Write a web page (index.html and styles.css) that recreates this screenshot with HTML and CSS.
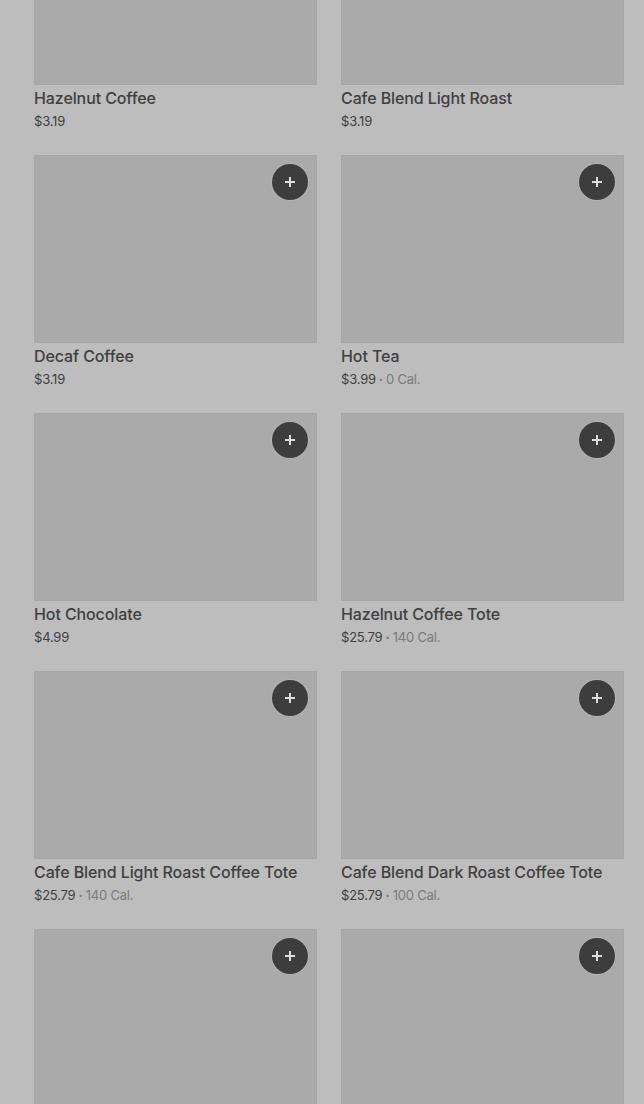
FILE: index.html
```html
<!DOCTYPE html>
<html>
<head>
<meta charset="utf-8">
<link rel="stylesheet" href="styles.css">
</head>
<body>
<div class="grid">
  <div class="card"><div class="img"><button class="add"><svg viewBox="0 0 12 12"><path d="M6 1v10M1 6h10"/></svg></button></div><div class="title">Hazelnut Coffee</div><div class="price">$3.19</div></div>
  <div class="card"><div class="img"><button class="add"><svg viewBox="0 0 12 12"><path d="M6 1v10M1 6h10"/></svg></button></div><div class="title">Cafe Blend Light Roast</div><div class="price">$3.19</div></div>
  <div class="card"><div class="img"><button class="add"><svg viewBox="0 0 12 12"><path d="M6 1v10M1 6h10"/></svg></button></div><div class="title">Decaf Coffee</div><div class="price">$3.19</div></div>
  <div class="card"><div class="img"><button class="add"><svg viewBox="0 0 12 12"><path d="M6 1v10M1 6h10"/></svg></button></div><div class="title">Hot Tea</div><div class="price">$3.99<span class="cal"><span class="dot">·</span>0 Cal.</span></div></div>
  <div class="card"><div class="img"><button class="add"><svg viewBox="0 0 12 12"><path d="M6 1v10M1 6h10"/></svg></button></div><div class="title">Hot Chocolate</div><div class="price">$4.99</div></div>
  <div class="card"><div class="img"><button class="add"><svg viewBox="0 0 12 12"><path d="M6 1v10M1 6h10"/></svg></button></div><div class="title">Hazelnut Coffee Tote</div><div class="price">$25.79<span class="cal"><span class="dot">·</span>140 Cal.</span></div></div>
  <div class="card"><div class="img"><button class="add"><svg viewBox="0 0 12 12"><path d="M6 1v10M1 6h10"/></svg></button></div><div class="title">Cafe Blend Light Roast Coffee Tote</div><div class="price">$25.79<span class="cal"><span class="dot">·</span>140 Cal.</span></div></div>
  <div class="card"><div class="img"><button class="add"><svg viewBox="0 0 12 12"><path d="M6 1v10M1 6h10"/></svg></button></div><div class="title">Cafe Blend Dark Roast Coffee Tote</div><div class="price">$25.79<span class="cal"><span class="dot">·</span>100 Cal.</span></div></div>
  <div class="card"><div class="img"><button class="add"><svg viewBox="0 0 12 12"><path d="M6 1v10M1 6h10"/></svg></button></div></div>
  <div class="card"><div class="img"><button class="add"><svg viewBox="0 0 12 12"><path d="M6 1v10M1 6h10"/></svg></button></div></div>
</div>
</body>
</html>
```
FILE: styles.css
```css
html, body {
  margin: 0;
  padding: 0;
  background: #bdbdbd;
  height: 1104px;
  overflow: hidden;
}
body {
  font-family: Inter, "Noto Sans", sans-serif;
  color: #3b3b3b;
}
.grid {
  display: grid;
  grid-template-columns: 283px 283px;
  column-gap: 24px;
  row-gap: 25px;
  padding: 0 20px 0 34px;
  margin-top: -103px;
}
.card {
  display: flex;
  flex-direction: column;
}
.img {
  position: relative;
  height: 188px;
  background: #aaaaaa;
  box-shadow: inset 0 0 0 1px #a6a6a6;
}
.add {
  position: absolute;
  top: 9px;
  right: 9px;
  width: 36px;
  height: 36px;
  border-radius: 50%;
  border: none;
  padding: 0;
  background: #3d3d3d;
  box-shadow: 0 0 0 1px #b3b3b3;
  display: flex;
  align-items: center;
  justify-content: center;
}
.add svg {
  width: 12px;
  height: 12px;
  stroke: #dcdcdc;
  stroke-width: 2;
  fill: none;
}
.title {
  margin-top: 3px;
  font-size: 16px;
  line-height: 20px;
  font-weight: 500;
  color: #404040;
  letter-spacing: -0.1px;
}
.price {
  margin-top: 4px;
  font-size: 13px;
  line-height: 18px;
  color: #3f3f3f;
  letter-spacing: -0.2px;
}
.cal {
  color: #7b7b7b;
}
.dot {
  margin: 0 3px;
  font-weight: 700;
}
```
